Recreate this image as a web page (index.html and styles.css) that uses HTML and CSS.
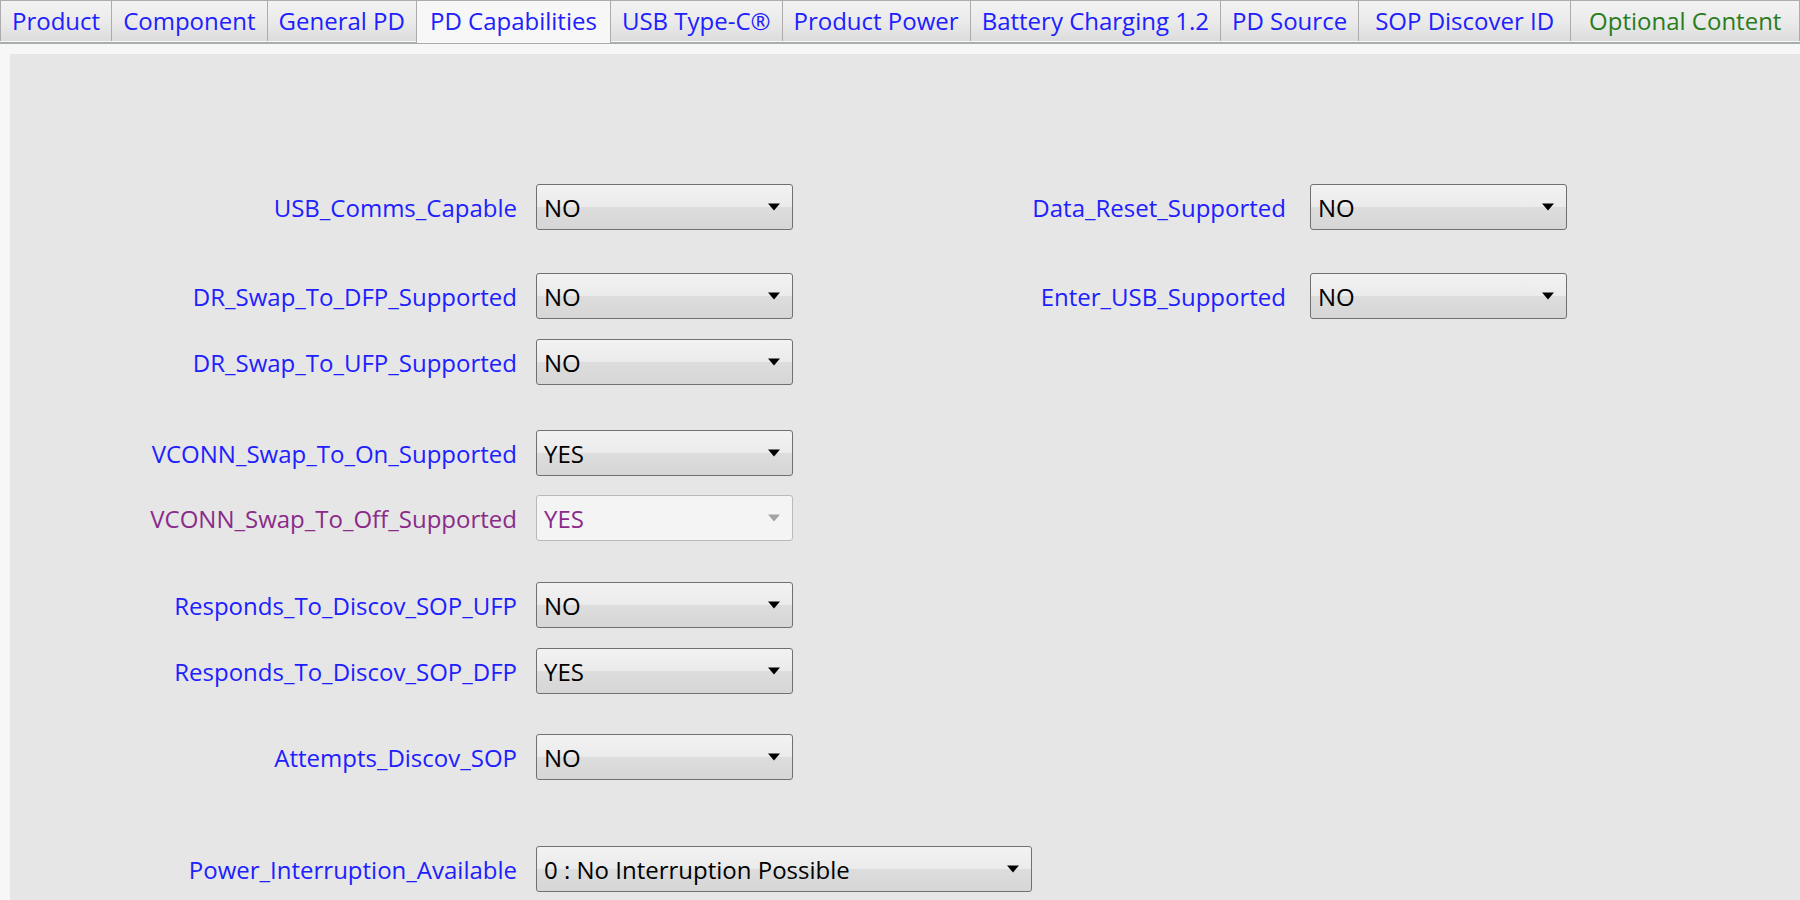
FILE: index.html
```html
<!DOCTYPE html>
<html>
<head>
<meta charset="utf-8">
<link rel="stylesheet" href="styles.css">
</head>
<body>
<div class="tabs">
  <div class="tab">Product</div>
  <div class="tab">Component</div>
  <div class="tab">General PD</div>
  <div class="tab active">PD Capabilities</div>
  <div class="tab">USB Type-C®</div>
  <div class="tab">Product Power</div>
  <div class="tab">Battery Charging 1.2</div>
  <div class="tab">PD Source</div>
  <div class="tab wider">SOP Discover ID</div>
  <div class="tab optional">Optional Content</div>
</div>
<div class="panel">
  <div class="content">
    <div class="form">
      <div class="group">
        <div class="row">
          <div class="label">USB_Comms_Capable</div>
          <div class="combo"><span>NO</span><svg class="arrow" viewBox="0 0 10 6"><path d="M0 0H10L5 6Z"/></svg></div>
          <div class="label right">Data_Reset_Supported</div>
          <div class="combo"><span>NO</span><svg class="arrow" viewBox="0 0 10 6"><path d="M0 0H10L5 6Z"/></svg></div>
        </div>
      </div>
      <div class="group">
        <div class="row">
          <div class="label">DR_Swap_To_DFP_Supported</div>
          <div class="combo"><span>NO</span><svg class="arrow" viewBox="0 0 10 6"><path d="M0 0H10L5 6Z"/></svg></div>
          <div class="label right">Enter_USB_Supported</div>
          <div class="combo"><span>NO</span><svg class="arrow" viewBox="0 0 10 6"><path d="M0 0H10L5 6Z"/></svg></div>
        </div>
        <div class="row">
          <div class="label">DR_Swap_To_UFP_Supported</div>
          <div class="combo"><span>NO</span><svg class="arrow" viewBox="0 0 10 6"><path d="M0 0H10L5 6Z"/></svg></div>
        </div>
      </div>
      <div class="group loose">
        <div class="row">
          <div class="label">VCONN_Swap_To_On_Supported</div>
          <div class="combo"><span>YES</span><svg class="arrow" viewBox="0 0 10 6"><path d="M0 0H10L5 6Z"/></svg></div>
        </div>
        <div class="row">
          <div class="label disabled">VCONN_Swap_To_Off_Supported</div>
          <div class="combo disabled"><span>YES</span><svg class="arrow" viewBox="0 0 10 6"><path d="M0 0H10L5 6Z"/></svg></div>
        </div>
      </div>
      <div class="group pulled">
        <div class="row">
          <div class="label">Responds_To_Discov_SOP_UFP</div>
          <div class="combo"><span>NO</span><svg class="arrow" viewBox="0 0 10 6"><path d="M0 0H10L5 6Z"/></svg></div>
        </div>
        <div class="row">
          <div class="label">Responds_To_Discov_SOP_DFP</div>
          <div class="combo"><span>YES</span><svg class="arrow" viewBox="0 0 10 6"><path d="M0 0H10L5 6Z"/></svg></div>
        </div>
      </div>
      <div class="group tight">
        <div class="row">
          <div class="label">Attempts_Discov_SOP</div>
          <div class="combo"><span>NO</span><svg class="arrow" viewBox="0 0 10 6"><path d="M0 0H10L5 6Z"/></svg></div>
        </div>
      </div>
      <div class="group last">
        <div class="row">
          <div class="label">Power_Interruption_Available</div>
          <div class="combo wide"><span>0 : No Interruption Possible</span><svg class="arrow" viewBox="0 0 10 6"><path d="M0 0H10L5 6Z"/></svg></div>
        </div>
      </div>
    </div>
  </div>
</div>
</body>
</html>
```

FILE: styles.css
```css
html, body {
  margin: 0;
  padding: 0;
  width: 1800px;
  height: 900px;
  overflow: hidden;
  background: #f7f7f7;
  font-family: "Open Sans", "Noto Sans", sans-serif;
  font-size: 24px;
}

.tabs {
  display: flex;
  align-items: flex-start;
  height: 42px;
}

.tab {
  box-sizing: border-box;
  height: 41px;
  padding: 0 11px;
  margin-right: -1px;
  border: 1px solid #acacac;
  border-bottom: none;
  background: linear-gradient(#f2f2f2, #ebebeb 50%, #dcdcdc);
  color: #2020ff;
  line-height: 39px;
  white-space: nowrap;
}

.tab.wider {
  padding: 0 16px;
}

.tab.active {
  height: 43px;
  background: #f7f7f7;
  position: relative;
  z-index: 1;
  padding: 0 13px;
}

.tab.optional {
  color: #2a7d1c;
  padding: 0 18px;
}

.panel {
  border-top: 2px solid #a8aeae;
  padding: 10px 0 0 10px;
  background: #f7f7f7;
}

.content {
  background: #e6e6e6;
  height: 846px;
  padding-top: 130px;
  box-sizing: border-box;
}

.form {
  display: flex;
  flex-direction: column;
  gap: 43px;
}

.group {
  display: flex;
  flex-direction: column;
  gap: 20px;
}

.group.loose {
  margin-top: 2px;
  gap: 19px;
}

.group.pulled {
  margin-top: -2px;
}

.group.tight {
  margin-top: -3px;
}

.group.last {
  margin-top: 23px;
}

.row {
  display: grid;
  grid-template-columns: 526px 257px 517px 257px;
  height: 46px;
  align-items: center;
}

.label {
  text-align: right;
  padding-right: 19px;
  color: #2020ff;
  white-space: nowrap;
}

.label.right {
  padding-right: 24px;
}

.label.disabled {
  color: #8a2b8a;
}

.combo {
  box-sizing: border-box;
  height: 46px;
  display: flex;
  align-items: center;
  justify-content: space-between;
  padding: 0 12px 0 7px;
  border: 1px solid #707070;
  border-radius: 3px;
  background: linear-gradient(#f2f2f2, #ebebeb 50%, #dddddd 51%, #d6d6d6);
  color: #000;
  white-space: nowrap;
}

.combo.wide {
  width: 496px;
}

.combo.disabled {
  border-color: #b9b9b9;
  background: #f4f4f4;
  color: #8a2b8a;
}

.arrow {
  width: 12px;
  height: 8px;
  fill: #000;
}

.combo.disabled .arrow {
  fill: #a3a3a3;
}
```
